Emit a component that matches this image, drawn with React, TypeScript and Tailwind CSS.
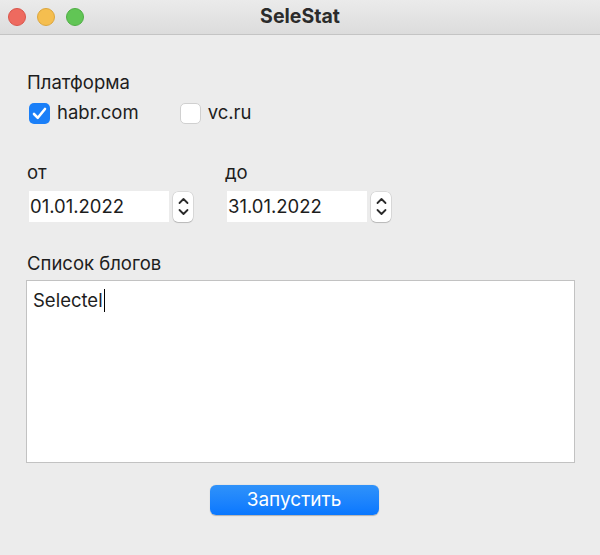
import React from 'react'

function Stepper() {
  return (
    <div className="w-[20px] h-[30px] ml-[4px] bg-white rounded-[5px] shadow-[0_0_0_0.5px_rgba(0,0,0,0.15),0_1px_1px_rgba(0,0,0,0.15)] flex flex-col items-center justify-center gap-[3px]">
      <svg width="11" height="8" viewBox="0 0 11 8" fill="none">
        <path d="M1.5 6 L5.5 2 L9.5 6" stroke="#2b2b2b" strokeWidth="1.8" strokeLinecap="round" strokeLinejoin="round" />
      </svg>
      <svg width="11" height="8" viewBox="0 0 11 8" fill="none">
        <path d="M1.5 2 L5.5 6 L9.5 2" stroke="#2b2b2b" strokeWidth="1.8" strokeLinecap="round" strokeLinejoin="round" />
      </svg>
    </div>
  )
}

function DateField({ label, value }: { label: string; value: string }) {
  return (
    <div className="flex flex-col">
      <div className="h-[22px] leading-[22px] text-[18.5px]">{label}</div>
      <div className="flex flex-row items-center mt-[8px] ml-[2px]">
        <div className="w-[140px] h-[31px] bg-white flex items-center pl-[1px] text-[18.5px]">{value}</div>
        <Stepper />
      </div>
    </div>
  )
}

export default function App() {
  return (
    <div
      className="w-[600px] h-[555px] bg-[#ececec] flex flex-col text-[#1d1d1d]"
      style={{ fontFamily: 'Inter, "Noto Sans", sans-serif' }}
    >
      <div className="h-[35px] bg-gradient-to-b from-[#ebebeb] to-[#dcdcdc] border-b border-[#c4c4c4] grid grid-cols-[1fr_auto_1fr] items-center">
        <div className="flex flex-row gap-[11px] pl-[8px]">
          <div className="w-[18px] h-[18px] rounded-full bg-[#ee6a5f] border border-[#d9554b]" />
          <div className="w-[18px] h-[18px] rounded-full bg-[#f5be4f] border border-[#dca63d]" />
          <div className="w-[18px] h-[18px] rounded-full bg-[#61c555] border border-[#4fae44]" />
        </div>
        <div className="text-[19.5px] font-bold text-[#2b2b2b]">SeleStat</div>
        <div />
      </div>

      <div className="flex flex-col pl-[27px] pr-[25px]">
        <div className="mt-[36px] h-[22px] leading-[22px] text-[18.5px]">Платформа</div>
        <div className="flex flex-row items-center mt-[9px] ml-[2px] h-[22px]">
          <div className="w-[21px] h-[21px] rounded-[5px] bg-[#1a7ff8] flex items-center justify-center">
            <svg width="15" height="13" viewBox="0 0 15 13" fill="none">
              <path d="M2 7 L5.8 10.8 L13 2" stroke="white" strokeWidth="2.6" strokeLinecap="round" strokeLinejoin="round" />
            </svg>
          </div>
          <span className="ml-[7px] text-[18.5px]">habr.com</span>
          <div className="ml-[41px] w-[21px] h-[21px] rounded-[5px] bg-white border border-[#d0d0d0]" />
          <span className="ml-[7px] text-[18.5px]">vc.ru</span>
        </div>

        <div className="flex flex-row gap-[32px] mt-[37px]">
          <DateField label="от" value="01.01.2022" />
          <DateField label="до" value="31.01.2022" />
        </div>

        <div className="mt-[30px] h-[22px] leading-[22px] text-[18.5px]">Список блогов</div>
        <div className="mt-[6px] -ml-[1px] w-[549px] h-[183px] bg-white border border-[#c2c2c2] px-[6px] pt-[6px] text-[18.5px]">
          <span>Selectel</span>
          <span className="inline-block w-[1.5px] h-[23px] bg-black align-[-5px] ml-[1px]" />
        </div>

        <div className="flex justify-center mt-[22px] pr-[14px]">
          <button className="w-[169px] h-[30px] rounded-[6px] bg-gradient-to-b from-[#2f92fa] to-[#0877ff] text-white text-[19px] shadow-[0_0.5px_1px_rgba(0,0,0,0.25)]">
            Запустить
          </button>
        </div>
      </div>
    </div>
  )
}
